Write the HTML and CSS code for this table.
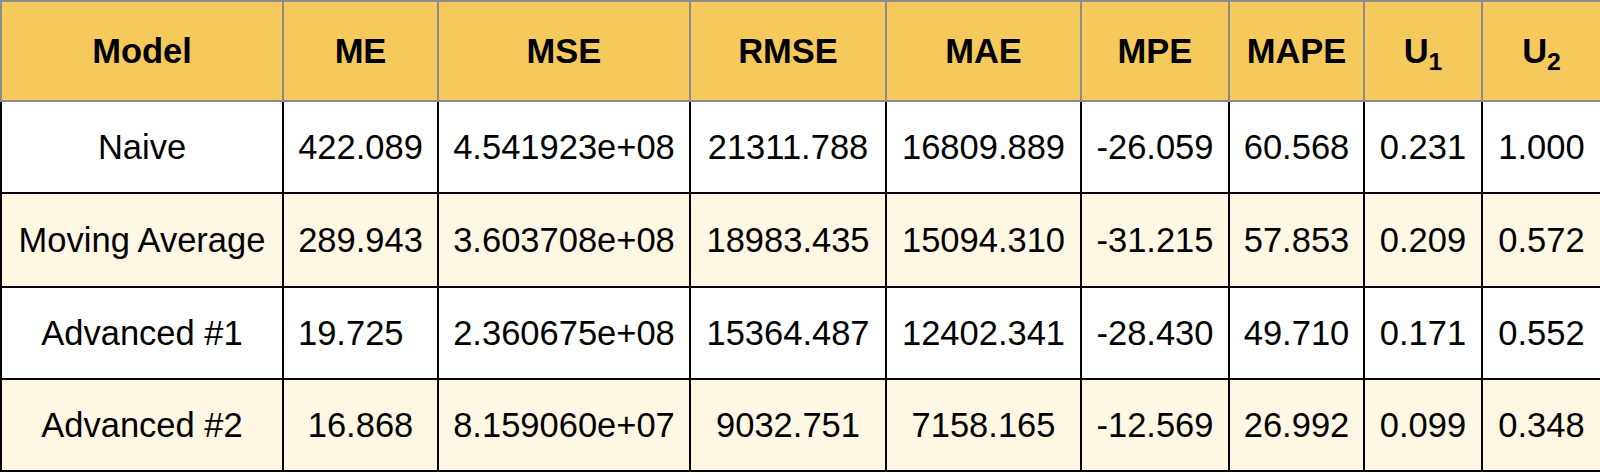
FILE: index.html
```html
<!DOCTYPE html>
<html>
<head>
<meta charset="utf-8">
<link rel="stylesheet" href="styles.css">
</head>
<body>
<table class="metrics">
  <colgroup>
    <col class="c-model"><col class="c-me"><col class="c-mse"><col class="c-rmse"><col class="c-mae"><col class="c-mpe"><col class="c-mape"><col class="c-u1"><col class="c-u2">
  </colgroup>
  <thead>
    <tr class="head">
      <th>Model</th><th>ME</th><th>MSE</th><th>RMSE</th><th>MAE</th><th>MPE</th><th>MAPE</th><th>U<sub>1</sub></th><th>U<sub>2</sub></th>
    </tr>
  </thead>
  <tbody>
    <tr class="r1">
      <td>Naive</td><td>422.089</td><td>4.541923e+08</td><td>21311.788</td><td>16809.889</td><td>-26.059</td><td>60.568</td><td>0.231</td><td>1.000</td>
    </tr>
    <tr class="r2 alt">
      <td>Moving Average</td><td>289.943</td><td>3.603708e+08</td><td>18983.435</td><td>15094.310</td><td>-31.215</td><td>57.853</td><td>0.209</td><td>0.572</td>
    </tr>
    <tr class="r3">
      <td>Advanced #1</td><td class="left">19.725</td><td>2.360675e+08</td><td>15364.487</td><td>12402.341</td><td>-28.430</td><td>49.710</td><td>0.171</td><td>0.552</td>
    </tr>
    <tr class="r4 alt">
      <td>Advanced #2</td><td>16.868</td><td>8.159060e+07</td><td>9032.751</td><td>7158.165</td><td>-12.569</td><td>26.992</td><td>0.099</td><td>0.348</td>
    </tr>
  </tbody>
</table>
</body>
</html>
```
FILE: styles.css
```css
html, body {
  margin: 0;
  padding: 0;
  background: #ffffff;
}
.metrics {
  border-collapse: collapse;
  table-layout: fixed;
  width: 1600px;
  font-family: "Liberation Sans", Arial, sans-serif;
  font-size: 34.5px;
  color: #000;
}
.c-model { width: 282px; }
.c-me { width: 155px; }
.c-mse { width: 252px; }
.c-rmse { width: 196px; }
.c-mae { width: 195px; }
.c-mpe { width: 148px; }
.c-mape { width: 135px; }
.c-u1 { width: 118px; }
.c-u2 { width: 119px; }
.metrics th {
  background: #f6c95c;
  border: 2px solid #8c8c8c;
  font-weight: bold;
  text-align: center;
  vertical-align: middle;
  padding: 0;
}
.metrics td {
  border: 2px solid #000;
  text-align: center;
  vertical-align: middle;
  padding: 0;
  white-space: nowrap;
}
.metrics td.left {
  text-align: left;
  padding-left: 14px;
}
.metrics sub {
  font-size: 0.72em;
  vertical-align: -0.3em;
  line-height: 0;
}
.head { height: 100px; }
.r1 { height: 92px; }
.r2 { height: 94px; }
.r3 { height: 92px; }
.r4 { height: 92px; }
.alt td { background: #fef7e4; }
```
